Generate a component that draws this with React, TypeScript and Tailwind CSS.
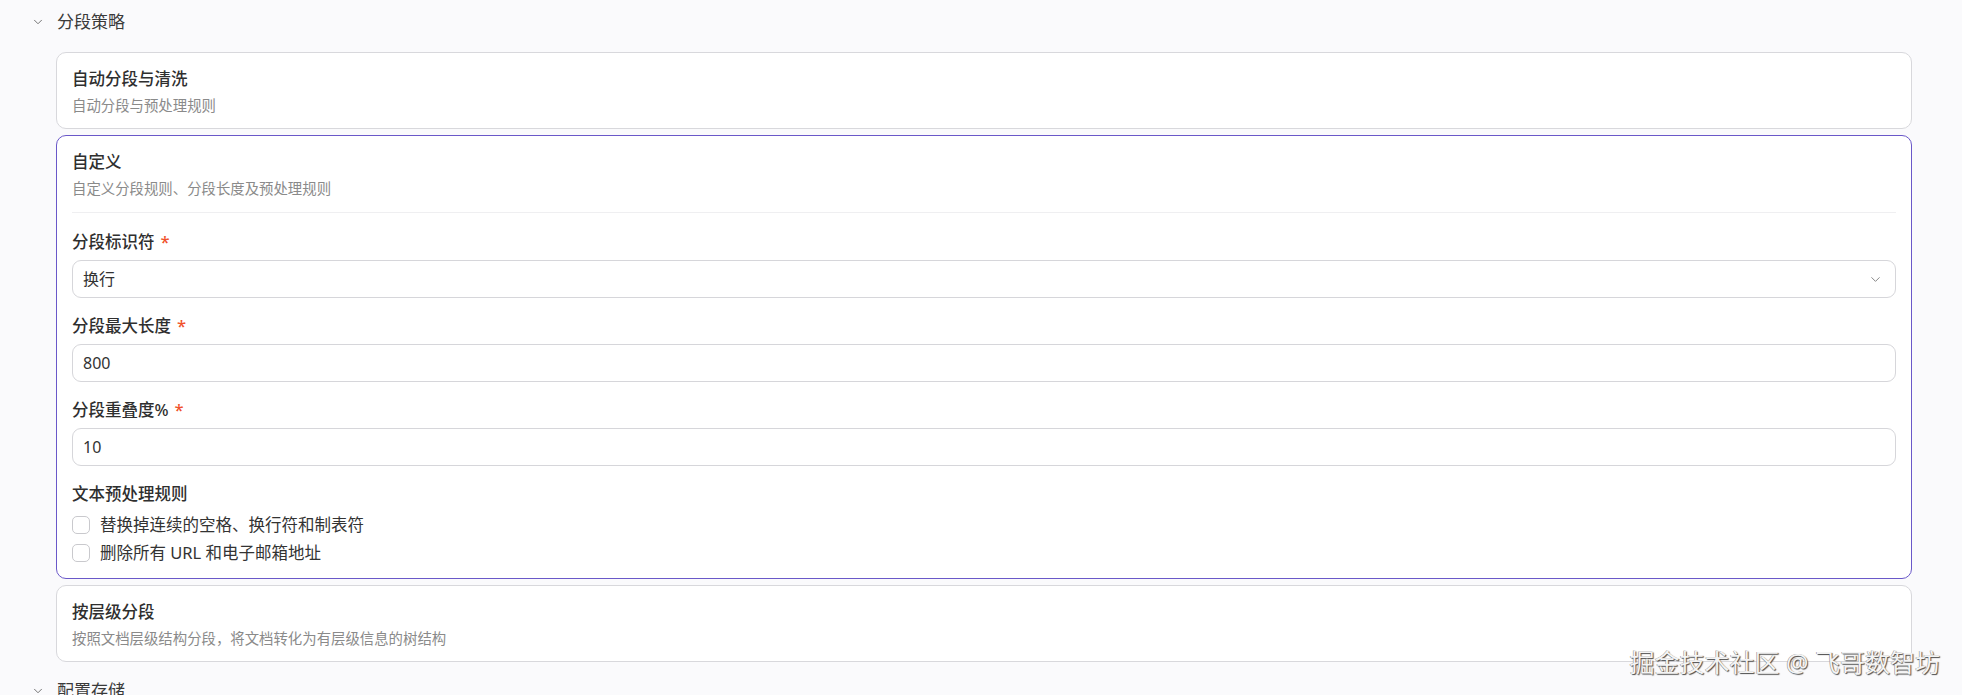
import React from "react";
import { ChevronDown } from "lucide-react";

const font = { fontFamily: '"Noto Sans", "Noto Sans CJK SC", sans-serif' };

function Header({ title }: { title: string }) {
  return (
    <div className="flex h-[44px] items-center pl-[31px]">
      <ChevronDown size={14} strokeWidth={1.6} className="text-[#6b6b6b]" />
      <span className="ml-[12px] text-[17px] leading-[22px] text-[#3a3a3a]">{title}</span>
    </div>
  );
}

function Label({ text, required }: { text: string; required?: boolean }) {
  return (
    <div className="flex items-center text-[16.5px] leading-[22px] font-medium text-[#2f2f2f]">
      <span>{text}</span>
      {required && <span className="ml-[6px] text-[#f0522b]">*</span>}
    </div>
  );
}

function Field({ label, value, select }: { label: string; value: string; select?: boolean }) {
  return (
    <div>
      <Label text={label} required />
      <div className="mt-[7px] flex h-[38px] items-center justify-between rounded-[9px] border border-[#d6d6da] bg-white pl-[10px] pr-[12px] text-[16px] text-[#333]">
        <span>{value}</span>
        {select && <ChevronDown size={15} strokeWidth={1.6} className="text-[#888]" />}
      </div>
    </div>
  );
}

function Checkbox({ text }: { text: string }) {
  return (
    <div className="flex h-[28px] items-center">
      <span className="h-[18px] w-[18px] shrink-0 rounded-[5px] border border-[#c9c9cd] bg-white" />
      <span className="ml-[10px] text-[16.5px] text-[#333]">{text}</span>
    </div>
  );
}

function Card({ title, desc, children, active }: { title: string; desc: string; children?: React.ReactNode; active?: boolean }) {
  return (
    <div
      className={
        "rounded-[10px] border bg-white px-[15px] pt-[15px] " +
        (active ? "border-[#6a58c9] pb-[11px]" : "border-[#d8d8dc] pb-[12px]")
      }
    >
      <div className="text-[16.5px] leading-[22px] font-medium text-[#2f2f2f]">{title}</div>
      <div className="mt-[6px] text-[14.4px] leading-[20px] text-[#8a8a8a]">{desc}</div>
      {children}
    </div>
  );
}

export default function App() {
  return (
    <div style={font} className="relative h-[695px] w-full overflow-hidden bg-[#fafafc]">
      <Header title="分段策略" />
      <div className="mt-[8px] ml-[56px] mr-[50px] flex flex-col gap-[6px]">
        <Card title="自动分段与清洗" desc="自动分段与预处理规则" />
        <Card title="自定义" desc="自定义分段规则、分段长度及预处理规则" active>
          <div className="mt-[13px] h-px bg-[#efeff1]" />
          <div className="mt-[18px] flex flex-col gap-[17px]">
            <Field label="分段标识符" value="换行" select />
            <Field label="分段最大长度" value="800" />
            <Field label="分段重叠度%" value="10" />
            <div>
              <Label text="文本预处理规则" />
              <div className="mt-[6px]">
                <Checkbox text="替换掉连续的空格、换行符和制表符" />
                <Checkbox text="删除所有 URL 和电子邮箱地址" />
              </div>
            </div>
          </div>
        </Card>
        <Card title="按层级分段" desc="按照文档层级结构分段，将文档转化为有层级信息的树结构" />
      </div>
      <div className="mt-[7px]">
        <Header title="配置存储" />
      </div>
      <div className="absolute right-[22px] bottom-[18px] text-[25px] leading-[30px] text-[#f4f4f4] [text-shadow:1px_1px_1px_#4a4a4a,-0.5px_-0.5px_0.5px_#888]">
        掘金技术社区 @ 飞哥数智坊
      </div>
    </div>
  );
}
